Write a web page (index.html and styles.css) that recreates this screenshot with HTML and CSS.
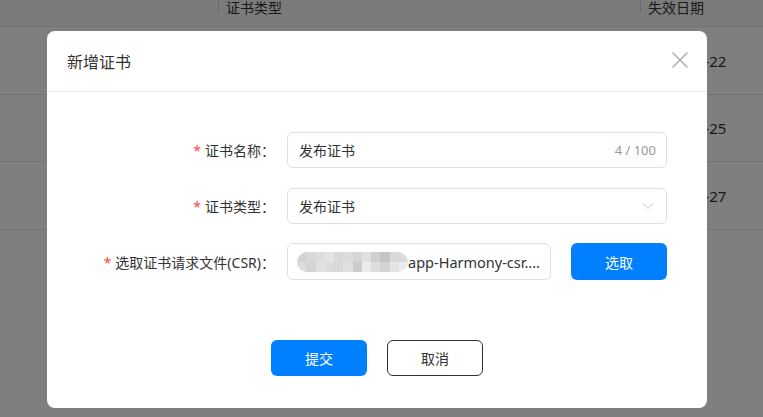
FILE: index.html
```html
<!DOCTYPE html>
<html lang="zh-CN">
<head>
<meta charset="utf-8">
<title>新增证书</title>
<link rel="stylesheet" href="styles.css">
</head>
<body>
<div class="page">
  <div class="thead">
    <div class="th c1"></div>
    <div class="th c2"><span class="sep"></span>证书类型</div>
    <div class="th c3"><span class="sep"></span>失效日期</div>
  </div>
  <div class="tr"><div class="td c1"></div><div class="td c2"></div><div class="td c3">2024-01-22</div></div>
  <div class="tr"><div class="td c1"></div><div class="td c2"></div><div class="td c3">2024-01-25</div></div>
  <div class="tr"><div class="td c1"></div><div class="td c2"></div><div class="td c3">2024-01-27</div></div>
</div>

<div class="mask">
  <div class="modal">
    <div class="modal-header">
      <div class="modal-title">新增证书</div>
      <svg class="close" width="18" height="18" viewBox="0 0 18 18"><path d="M1.5 1.5 L16.5 16.5 M16.5 1.5 L1.5 16.5" stroke="#a6a6a6" stroke-width="1.4" fill="none"/></svg>
    </div>
    <div class="modal-body">
      <div class="form-row">
        <label class="label"><span class="req">*</span>证书名称：</label>
        <div class="control input">
          <span class="value">发布证书</span>
          <span class="count">4 / 100</span>
        </div>
      </div>
      <div class="form-row">
        <label class="label"><span class="req">*</span>证书类型：</label>
        <div class="control input">
          <span class="value">发布证书</span>
          <svg class="arrow" width="12" height="8" viewBox="0 0 12 8"><path d="M1 1.5 L6 6.5 L11 1.5" stroke="#c2c2c2" stroke-width="1" fill="none"/></svg>
        </div>
      </div>
      <div class="form-row">
        <label class="label"><span class="req">*</span>选取证书请求文件(CSR)：</label>
        <div class="file-group">
          <div class="control input file">
            <div class="mosaic">
              <i style="background:#d2d2d2"></i><i style="background:#d9d9d9"></i><i style="background:#dedede"></i><i style="background:#e3e3e3"></i><i style="background:#d8d8d8"></i><i style="background:#dcdcdc"></i><i style="background:#d6d6d6"></i><i style="background:#e0e0e0"></i><i style="background:#cfcfcf"></i><i style="background:#c4c4c4"></i><i style="background:#d9d9d9"></i><i style="background:#dcdcdc"></i>
              <i style="background:#dcdcdc"></i><i style="background:#d4d4d4"></i><i style="background:#e1e1e1"></i><i style="background:#dcdcdc"></i><i style="background:#d9d9d9"></i><i style="background:#e0e0e0"></i><i style="background:#cccccc"></i><i style="background:#ececec"></i><i style="background:#dddddd"></i><i style="background:#d4d4d4"></i><i style="background:#e4e4e4"></i><i style="background:#ebebeb"></i>
            </div>
            <span class="value fname">app-Harmony-csr....</span>
          </div>
          <button class="btn primary">选取</button>
        </div>
      </div>
    </div>
    <div class="modal-footer">
      <button class="btn primary">提交</button>
      <button class="btn outline">取消</button>
    </div>
  </div>
</div>
</body>
</html>
```
FILE: styles.css
```css
* { box-sizing: border-box; }
html, body { margin: 0; padding: 0; }
body {
  width: 763px;
  height: 417px;
  overflow: hidden;
  background: #fff;
  font-family: "Noto Sans", "Noto Sans CJK SC", sans-serif;
  color: #333;
  position: relative;
}

/* background table */
.page { width: 763px; }
.thead {
  display: flex;
  height: 27px;
  background: #f6f6f6;
  border-bottom: 1px solid #e6e6e6;
  font-size: 14px;
  line-height: 15px;
  color: #333;
}
.th { position: relative; padding-left: 8px; }
.sep {
  position: absolute;
  left: 0;
  top: 0;
  width: 1px;
  height: 12px;
  background: #d0d0d0;
}
.c1 { width: 218px; }
.c2 { width: 422px; }
.c3 { flex: 1; }
.tr {
  display: flex;
  height: 68px;
  align-items: center;
  border-bottom: 1px solid #e6e6e6;
  font-size: 14px;
  color: #333;
}
.td { padding-left: 7px; }
.td.c3 { padding-left: 8px; font-size: 15px; }
.tr:nth-child(3) { height: 67px; }
.tr:nth-child(4) { height: 68px; }

/* mask */
.mask {
  position: absolute;
  inset: 0;
  background: rgba(0, 0, 0, 0.5);
  padding: 31px 0 0 47px;
}
.modal {
  width: 660px;
  height: 377px;
  background: #fff;
  border-radius: 8px;
  display: flex;
  flex-direction: column;
}
.modal-header {
  height: 61px;
  border-bottom: 1px solid #e8e8e8;
  display: flex;
  align-items: center;
  justify-content: space-between;
  padding: 0 18px 0 20px;
}
.modal-title {
  font-size: 16px;
  color: #333;
}
.close { display: block; margin-top: -2px; }

.modal-body {
  padding: 40px 40px 0 0;
  display: flex;
  flex-direction: column;
  gap: 20px;
}
.form-row {
  display: flex;
  align-items: center;
  height: 36px;
}
.form-row:nth-child(3) { height: 37px; margin-top: -1px; }
.label {
  width: 240px;
  padding-right: 12px;
  text-align: right;
  font-size: 14px;
  color: #333;
  white-space: nowrap;
}
.req {
  color: #f5474a;
  margin-right: 4px;
}
.control {
  height: 100%;
  border: 1px solid #dfdfe6;
  border-radius: 6px;
  display: flex;
  align-items: center;
  padding: 0 10px 0 11px;
}
.input { width: 380px; justify-content: space-between; }
.value { font-size: 14px; color: #333; }
.count { font-size: 13px; color: #999; }
.arrow { margin-right: 2px; }

.file-group {
  display: flex;
  height: 100%;
  gap: 20px;
}
.file {
  width: 264px;
  justify-content: flex-start;
  padding-left: 9px;
}
.mosaic {
  width: 111px;
  height: 20px;
  border-radius: 10px;
  overflow: hidden;
  display: grid;
  grid-template-columns: repeat(12, 1fr);
  grid-template-rows: 1fr 1fr;
  flex: none;
}
.mosaic i { display: block; }
.fname { font-size: 14.5px; margin-left: 0; white-space: nowrap; }

.btn {
  width: 96px;
  height: 36px;
  border-radius: 6px;
  font-family: inherit;
  font-size: 14px;
  cursor: pointer;
  padding: 0;
}
.file-group .btn { height: 37px; }
.primary {
  background: #007fff;
  border: none;
  color: #fff;
}
.outline {
  background: #fff;
  border: 1px solid #333;
  color: #333;
}
.modal-footer {
  margin-top: 60px;
  display: flex;
  justify-content: center;
  gap: 20px;
}
```
